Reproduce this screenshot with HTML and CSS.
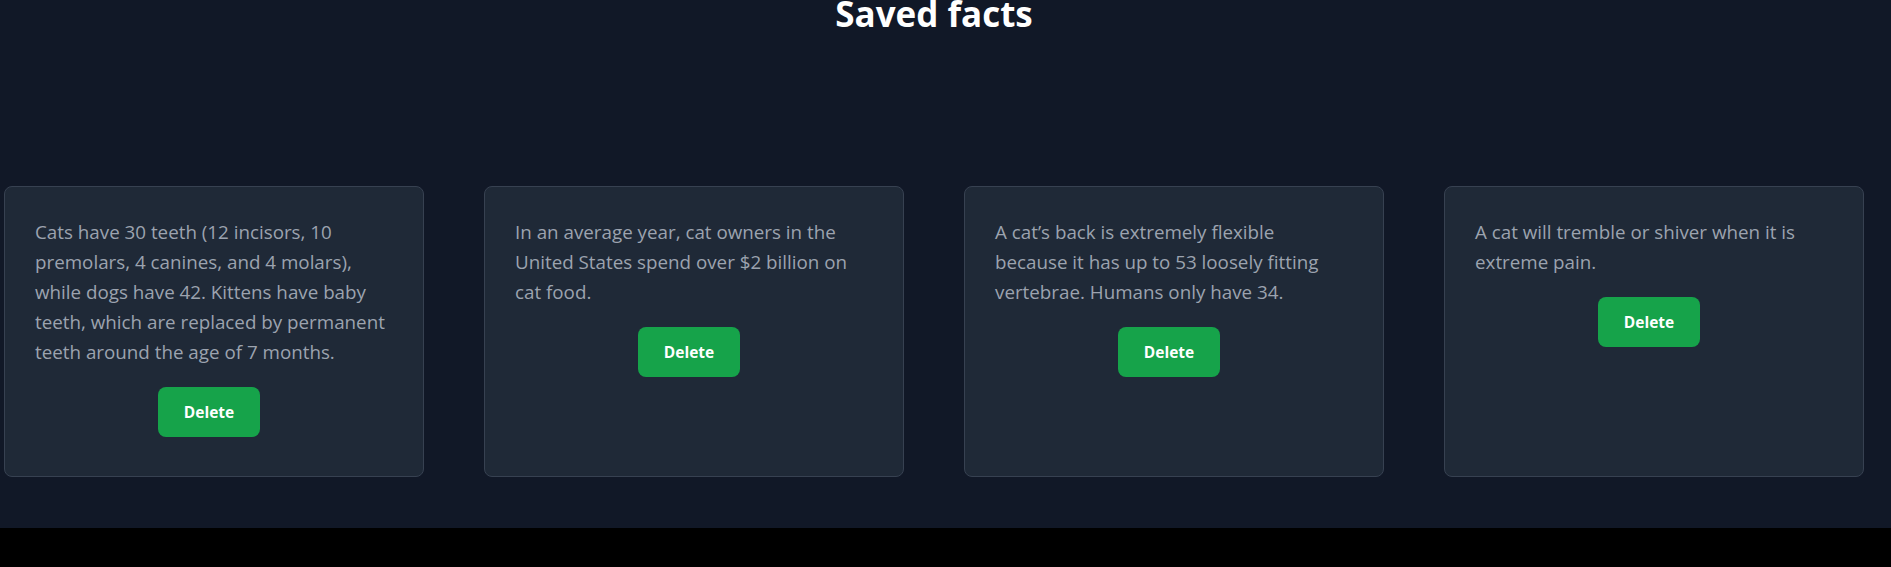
FILE: index.html
```html
<!DOCTYPE html>
<html lang="en">
<head>
<meta charset="utf-8">
<title>Saved facts</title>
<link rel="stylesheet" href="styles.css">
</head>
<body>
<main class="page">
  <div class="container">
    <h1 class="title">Saved facts</h1>
    <div class="cards">
      <div class="card">
        <p class="fact">Cats have 30 teeth (12 incisors, 10 premolars, 4 canines, and 4 molars), while dogs have 42. Kittens have baby teeth, which are replaced by permanent teeth around the age of 7 months.</p>
        <button class="delete">Delete</button>
      </div>
      <div class="card">
        <p class="fact">In an average year, cat owners in the United States spend over $2 billion on cat food.</p>
        <button class="delete">Delete</button>
      </div>
      <div class="card">
        <p class="fact">A cat’s back is extremely flexible because it has up to 53 loosely fitting vertebrae. Humans only have 34.</p>
        <button class="delete">Delete</button>
      </div>
      <div class="card">
        <p class="fact">A cat will tremble or shiver when it is extreme pain.</p>
        <button class="delete">Delete</button>
      </div>
    </div>
  </div>
</main>
</body>
</html>
```

FILE: styles.css
```css
html, body {
  margin: 0;
  padding: 0;
  background: #000;
}
body {
  font-family: "Open Sans", "Noto Sans", sans-serif;
}
.page {
  background: #111827;
  height: 528px;
  overflow: hidden;
}
.container {
  width: 1868px;
  display: flex;
  flex-direction: column;
  align-items: center;
}
.title {
  margin: -6px 0 0 0;
  font-size: 35px;
  line-height: 40px;
  font-weight: 700;
  color: #fff;
}
.cards {
  margin-top: 152px;
  display: flex;
  gap: 60px;
}
.card {
  box-sizing: border-box;
  width: 420px;
  height: 291px;
  background: #1f2937;
  border: 1px solid #374151;
  border-radius: 8px;
  padding: 30px 36px 30px 30px;
  display: flex;
  flex-direction: column;
  align-items: center;
}
.fact {
  margin: 0;
  align-self: stretch;
  font-size: 18.8px;
  line-height: 30px;
  color: #9ca3af;
}
.delete {
  margin: 20px 4px 0 0;
  width: 102px;
  height: 50px;
  border: none;
  border-radius: 8px;
  background: #16a34a;
  color: #fff;
  font-family: inherit;
  font-size: 15.5px;
  font-weight: 700;
}
```
